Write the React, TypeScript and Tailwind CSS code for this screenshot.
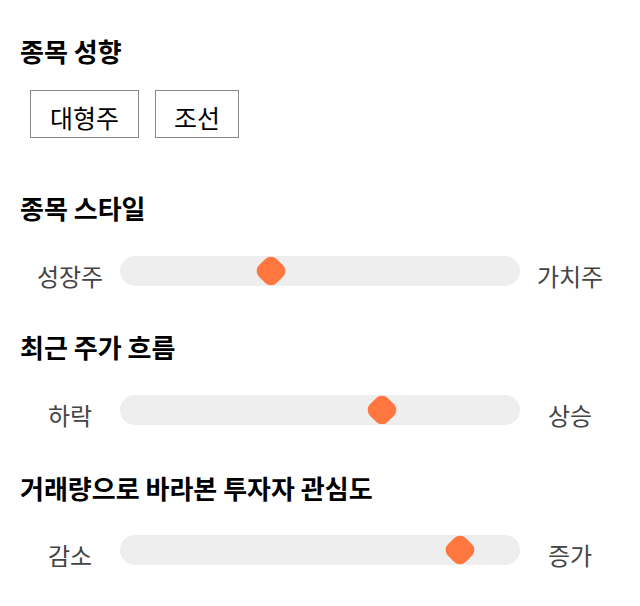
import React from "react";

type SliderRow = { left: string; right: string; pos: number };

const Heading = ({ children, className = "" }: { children: React.ReactNode; className?: string }) => (
  <h2 className={`text-[26px] leading-[32px] font-bold text-black ${className}`}>{children}</h2>
);

const Slider = ({ left, right, pos }: SliderRow) => (
  <div className="grid grid-cols-[100px_1fr_100px] items-center h-[30px]">
    <span className="text-center text-[24px] leading-[30px] text-[#444] translate-y-[5px]">{left}</span>
    <div className="relative h-[30px] bg-[#eeeeee] rounded-full">
      {/* thumb */}
      <div
        className="absolute top-1/2 w-[25px] h-[25px] bg-[#ff763f] rounded-[8px] rotate-45 -translate-x-1/2 -translate-y-1/2"
        style={{ left: `${pos}px` }}
      />
    </div>
    <span className="text-center text-[24px] leading-[30px] text-[#444] translate-y-[5px]">{right}</span>
  </div>
);

export default function App() {
  return (
    <div
      className="w-[640px] h-[606px] bg-white px-[20px] pt-[35px]"
      style={{ fontFamily: '"Noto Sans CJK KR", "Noto Sans", sans-serif' }}
    >
      <Heading>종목 성향</Heading>
      <div className="flex gap-4 mt-[23px] ml-[10px]">
        <button className="h-[48px] px-[19px] border border-[#888] text-[25px] leading-[30px] pt-[6px] text-black bg-white">대형주</button>
        <button className="h-[48px] px-[18px] border border-[#888] text-[25px] leading-[30px] pt-[6px] text-black bg-white">조선</button>
      </div>

      <Heading className="mt-[54px]">종목 스타일</Heading>
      <div className="mt-[32px]">
        <Slider left="성장주" right="가치주" pos={151} />
      </div>

      <Heading className="mt-[45px]">최근 주가 흐름</Heading>
      <div className="mt-[32px]">
        <Slider left="하락" right="상승" pos={262} />
      </div>

      <Heading className="mt-[47px]">거래량으로 바라본 투자자 관심도</Heading>
      <div className="mt-[31px]">
        <Slider left="감소" right="증가" pos={340} />
      </div>
    </div>
  );
}
